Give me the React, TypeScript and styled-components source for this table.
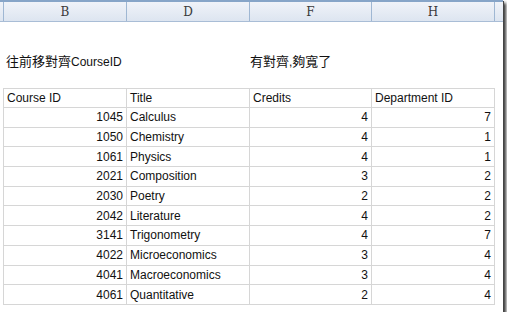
import React from "react";
import styled, { createGlobalStyle } from "styled-components";

const GlobalStyle = createGlobalStyle`
  html, body {
    margin: 0;
    padding: 0;
    background: #ffffff;
  }
  body {
    font-family: "Liberation Sans", Arial, "Noto Sans CJK TC", sans-serif;
  }
`;

const Frame = styled.div`
  width: 503px;
  height: 312px;
  background: #fff;
  box-shadow: 1px 1px 0 #444, 3px 3px 3px rgba(0, 0, 0, 0.8);
  overflow: hidden;
  display: flex;
  flex-direction: column;
`;

const ColumnHeader = styled.div`
  display: grid;
  grid-template-columns: 3px 123px 123px 122px 123px 1fr;
  height: 19px;
  border-top: 2px solid #87a5c8;
  border-bottom: 1px solid #a9bdd6;
  background: linear-gradient(to bottom, #f0f3f9, #dde5f0);
`;

const ColLabel = styled.div<{ $first?: boolean }>`
  display: flex;
  align-items: center;
  justify-content: center;
  border-left: ${(p) => (p.$first ? "none" : "1px solid #9fb7d3")};
  font-family: "DejaVu Serif", "Liberation Serif", serif;
  font-size: 12px;
  color: #3a3a3a;
`;

const Notes = styled.div`
  display: grid;
  grid-template-columns: 249px 1fr;
  margin-top: 28px;
  height: 20px;
  align-items: center;
  font-size: 12px;
  color: #111;
`;

const Note = styled.div<{ $pad: number }>`
  padding-left: ${(p) => p.$pad}px;
  white-space: nowrap;
`;

const Han = styled.span`
  font-family: "Noto Sans CJK TC", sans-serif;
  font-size: 13px;
`;

const Table = styled.table`
  margin: 18px 0 0 3px;
  border-collapse: collapse;
  table-layout: fixed;
  width: 491px;
  font-size: 12px;
  color: #111;
`;

const Cell = styled.td<{ $num?: boolean; $head?: boolean }>`
  border: 1px solid #d6d6d6;
  height: ${(p) => (p.$head ? 18 : 18.7)}px;
  padding: 0 ${(p) => (p.$num ? 3 : 2)}px 0 ${(p) => (p.$num ? 2 : 3)}px;
  text-align: ${(p) => (p.$num ? "right" : "left")};
  white-space: nowrap;
  line-height: 14px;
  vertical-align: middle;
`;

const rows: [number, string, number, number][] = [
  [1045, "Calculus", 4, 7],
  [1050, "Chemistry", 4, 1],
  [1061, "Physics", 4, 1],
  [2021, "Composition", 3, 2],
  [2030, "Poetry", 2, 2],
  [2042, "Literature", 4, 2],
  [3141, "Trigonometry", 4, 7],
  [4022, "Microeconomics", 3, 4],
  [4041, "Macroeconomics", 3, 4],
  [4061, "Quantitative", 2, 4],
];

export default function App() {
  return (
    <>
      <GlobalStyle />
      <Frame>
        <ColumnHeader>
          <ColLabel $first />
          <ColLabel>B</ColLabel>
          <ColLabel>D</ColLabel>
          <ColLabel>F</ColLabel>
          <ColLabel>H</ColLabel>
          <ColLabel />
        </ColumnHeader>
        <Notes>
          <Note $pad={6}>
            <Han>往前移對齊</Han>CourseID
          </Note>
          <Note $pad={1}>
            <Han>有對齊</Han>,<Han>夠寬了</Han>
          </Note>
        </Notes>
        <Table>
          <colgroup>
            <col style={{ width: 123 }} />
            <col style={{ width: 123 }} />
            <col style={{ width: 122 }} />
            <col style={{ width: 123 }} />
          </colgroup>
          <tbody>
            <tr>
              <Cell $head>Course ID</Cell>
              <Cell $head>Title</Cell>
              <Cell $head>Credits</Cell>
              <Cell $head>Department ID</Cell>
            </tr>
            {rows.map(([id, title, credits, dept]) => (
              <tr key={id}>
                <Cell $num>{id}</Cell>
                <Cell>{title}</Cell>
                <Cell $num>{credits}</Cell>
                <Cell $num>{dept}</Cell>
              </tr>
            ))}
          </tbody>
        </Table>
      </Frame>
    </>
  );
}
